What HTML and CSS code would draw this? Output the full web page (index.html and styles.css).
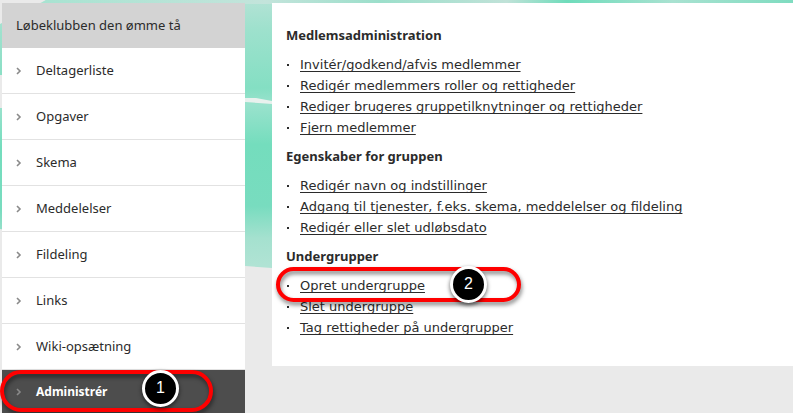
FILE: index.html
```
<!DOCTYPE html>
<html lang="da">
<head>
    <meta charset="UTF-8">
    <meta name="viewport" content="width=device-width, initial-scale=1.0">
    <title>Løbeklubben den ømme tå</title>
    <link rel="stylesheet" href="styles.css">
</head>
<body>
    <svg class="backdrop" viewBox="0 0 793 413" preserveAspectRatio="none" aria-hidden="true">
        <defs>
            <linearGradient id="wash" gradientUnits="userSpaceOnUse" x1="0" y1="0" x2="3" y2="268">
                <stop offset="0" stop-color="#b5e3d6"/>
                <stop offset="0.12" stop-color="#9ee1cd"/>
                <stop offset="0.34" stop-color="#84dfc3"/>
                <stop offset="0.4" stop-color="#9ae2cd"/>
                <stop offset="0.55" stop-color="#74ddbd"/>
                <stop offset="0.78" stop-color="#78dcbf"/>
                <stop offset="0.9" stop-color="#a5e1cf"/>
                <stop offset="1" stop-color="#b0e3d4"/>
            </linearGradient>
            <linearGradient id="edge" x1="0" y1="0" x2="1" y2="0">
                <stop offset="0" stop-color="#a8e3d1"/>
                <stop offset="0.3" stop-color="#c3e4db"/>
                <stop offset="0.45" stop-color="#9cdfcb"/>
                <stop offset="0.62" stop-color="#c0e2d8"/>
                <stop offset="0.7" stop-color="#6fdcbb"/>
                <stop offset="0.84" stop-color="#a9e2d1"/>
                <stop offset="1" stop-color="#7fdcc0"/>
            </linearGradient>
        </defs>
        <path fill="url(#wash)" d="M0 24 L46 0 H793 V310 L272 268 L245 266 L0 229 V108 H2 V75 H0 Z"/>
        <path fill="url(#edge)" d="M46 0 H793 V4 H40 Z"/>
        <path fill="#e9f1ee" d="M245 98 L256 98 L272 101 V104 L258 103 L245 102 Z"/>
    </svg>

    <div class="page">
        <nav class="sidebar">
            <h2>Løbeklubben den ømme tå</h2>
            <ul>
                <li><a href="#"><svg class="arrow" viewBox="0 0 6 8"><path d="M1 1 L4 4 L1 7"/></svg>Deltagerliste</a></li>
                <li><a href="#"><svg class="arrow" viewBox="0 0 6 8"><path d="M1 1 L4 4 L1 7"/></svg>Opgaver</a></li>
                <li><a href="#"><svg class="arrow" viewBox="0 0 6 8"><path d="M1 1 L4 4 L1 7"/></svg>Skema</a></li>
                <li><a href="#"><svg class="arrow" viewBox="0 0 6 8"><path d="M1 1 L4 4 L1 7"/></svg>Meddelelser</a></li>
                <li><a href="#"><svg class="arrow" viewBox="0 0 6 8"><path d="M1 1 L4 4 L1 7"/></svg>Fildeling</a></li>
                <li><a href="#"><svg class="arrow" viewBox="0 0 6 8"><path d="M1 1 L4 4 L1 7"/></svg>Links</a></li>
                <li><a href="#"><svg class="arrow" viewBox="0 0 6 8"><path d="M1 1 L4 4 L1 7"/></svg>Wiki-opsætning</a></li>
                <li class="active">
                    <a href="#"><svg class="arrow" viewBox="0 0 6 8"><path d="M1 1 L4 4 L1 7"/></svg>Administrér</a>
                    <span class="ring ring-menu"></span>
                    <span class="step step-menu">1</span>
                </li>
            </ul>
        </nav>

        <main class="content">
            <h3>Medlemsadministration</h3>
            <ul>
                <li><a href="#">Invitér/godkend/afvis medlemmer</a></li>
                <li><a href="#">Redigér medlemmers roller og rettigheder</a></li>
                <li><a href="#">Rediger brugeres gruppetilknytninger og rettigheder</a></li>
                <li><a href="#">Fjern medlemmer</a></li>
            </ul>
            <h3>Egenskaber for gruppen</h3>
            <ul>
                <li><a href="#">Redigér navn og indstillinger</a></li>
                <li><a href="#">Adgang til tjenester, f.eks. skema, meddelelser og fildeling</a></li>
                <li><a href="#">Redigér eller slet udløbsdato</a></li>
            </ul>
            <h3>Undergrupper</h3>
            <ul>
                <li>
                    <a href="#">Opret undergruppe</a>
                    <span class="ring ring-create"></span>
                    <span class="step step-create">2</span>
                </li>
                <li><a href="#">Slet undergruppe</a></li>
                <li><a href="#">Tag rettigheder på undergrupper</a></li>
            </ul>
        </main>
    </div>
</body>
</html>
```
FILE: styles.css
```
* {
    box-sizing: border-box;
}
body {
    margin: 0;
    min-height: 100vh;
    background-color: #eaeaea;
    color: #2b2b2b;
    font-family: "Noto Sans", Verdana, sans-serif;
    font-size: 13px;
}
ul {
    list-style: none;
    margin: 0;
    padding: 0;
}
a {
    color: inherit;
}
.backdrop {
    position: absolute;
    top: 0;
    left: 0;
    width: 100%;
    height: 413px;
    z-index: -1;
}
.page {
    display: flex;
    align-items: flex-start;
    gap: 27px;
    padding: 3px 0 0 2px;
}

/* menu */
.sidebar {
    flex: 0 0 243px;
    background-color: #fff;
}
.sidebar h2 {
    margin: 0;
    padding: 0 14px;
    background-color: #d3d3d3;
    font-size: 13px;
    font-weight: normal;
    line-height: 45px;
}
.sidebar li {
    position: relative;
    border-bottom: 1px solid #e2e2e2;
}
.sidebar a {
    display: flex;
    align-items: center;
    gap: 14px;
    padding-left: 14px;
    line-height: 45px;
    text-decoration: none;
}
.sidebar .active {
    border-bottom: none;
    background-color: #4d4d4d;
    color: #fff;
    font-size: 12px;
    font-weight: bold;
}
.sidebar .active a {
    line-height: 43px;
}
.arrow {
    width: 6px;
    height: 8px;
    fill: none;
    stroke: #8a8a8a;
    stroke-width: 1.6;
}

/* links */
.content {
    flex: 1;
    padding: 22px 14px 28px;
    background-color: #fff;
    line-height: 21px;
}
.content h3 {
    margin: 0 0 8px;
    font-size: 13px;
}
.content ul + h3 {
    margin-top: 8px;
}
.content li {
    position: relative;
    padding-left: 14px;
    font-family: "DejaVu Sans", Verdana, sans-serif;
}
.content li::before {
    content: "";
    position: absolute;
    top: 10px;
    left: 1px;
    width: 2px;
    height: 2px;
    background-color: #2b2b2b;
}
.content a {
    text-underline-offset: 2px;
    text-decoration-thickness: 1px;
    text-decoration-skip-ink: none;
}

/* numbered steps */
.ring {
    position: absolute;
    border: 4px solid #f00;
    border-radius: 24px;
    filter: drop-shadow(1px 3px 2px rgba(0, 0, 0, 0.5));
    pointer-events: none;
    z-index: 1;
}
.ring-menu {
    top: 0;
    left: -2px;
    width: 213px;
    height: 42px;
}
.ring-create {
    top: -8px;
    left: -10px;
    width: 245px;
    height: 35px;
}
.step {
    position: absolute;
    width: 37px;
    height: 37px;
    border: 3px solid #fff;
    border-radius: 50%;
    background-color: #000;
    box-shadow: 0 2px 4px rgba(0, 0, 0, 0.6);
    color: #fff;
    font-family: "Liberation Sans", Arial, sans-serif;
    font-size: 16px;
    font-weight: normal;
    line-height: 30px;
    text-align: center;
    z-index: 2;
}
.step-menu {
    top: 0;
    left: 140px;
}
.step-create {
    top: -9px;
    left: 164px;
}
```
